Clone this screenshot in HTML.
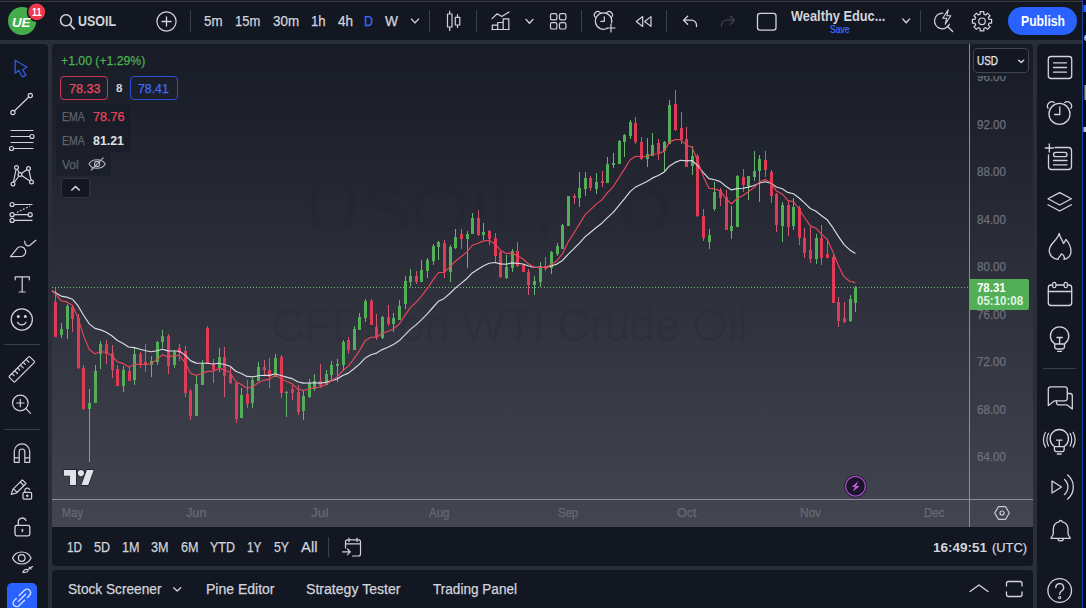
<!DOCTYPE html>
<html lang="en"><head><meta charset="utf-8"><title>USOIL chart</title>
<style>
html,body{margin:0;padding:0;}
body{width:1086px;height:608px;overflow:hidden;background:#2a2e39;font-family:"Liberation Sans", sans-serif;position:relative;}
.abs{position:absolute;}
.t{position:absolute;white-space:nowrap;transform-origin:0 50%;-webkit-text-stroke:0.25px currentColor;}
#top{left:0;top:0;width:1082px;height:40px;background:#131722;}
#topline{left:0;top:0;width:1086px;height:2px;background:linear-gradient(180deg,#1a1b20 0,#1a1b20 50%,#363942 50%,#363942 100%);}
#left{left:0;top:44px;width:48px;height:564px;background:#131722;border-top-right-radius:4px;}
#right{left:1037px;top:44px;width:45px;height:564px;background:#131722;border-top-left-radius:4px;}
#edge{left:1082px;top:0;width:4px;height:608px;background:#0b0d14;border-left:1px solid #1d3f9e;box-sizing:border-box;}
#chart{left:52px;top:44px;width:981px;height:483px;background:linear-gradient(180deg,#171b26 0%,#434550 100%);border-radius:4px 4px 0 0;overflow:hidden;}
#range{left:52px;top:527px;width:981px;height:39px;background:#131722;border-radius:0 0 4px 4px;}
#bottom{left:52px;top:570px;width:981px;height:38px;background:#131722;border-radius:4px 4px 0 0;}
#wm1,#wm2{position:absolute;color:rgba(0,0,0,0.07);white-space:nowrap;text-align:center;left:52px;width:918px;}
#wm1{top:121px;font-size:76px;line-height:90px;transform:scaleY(0.86);left:253px;color:rgba(0,0,0,0.035);width:auto;text-align:left;}
#wm2{top:254px;font-size:46px;line-height:54px;left:219px;width:auto;text-align:left;letter-spacing:-0.45px;}
.lg{background:rgba(19,23,34,0.42);}
#usd{left:973px;top:48px;width:56px;height:25px;box-sizing:border-box;border:1px solid #41444f;border-radius:4px;background:#131722;}
#plabel{left:969px;top:279px;width:60px;height:31px;background:#52af57;border-radius:0 2px 2px 0;}
#pub{left:1008px;top:7px;width:69px;height:28px;border-radius:14px;background:#2962ff;}
#linkb{left:7px;top:583px;width:30px;height:30px;border-radius:5px;background:#2962ff;}
#collapse{left:61px;top:178px;width:29px;height:20px;box-sizing:border-box;border:1px solid #2f333e;border-radius:3px;background:#131722;}
.box{box-sizing:border-box;border-radius:4px;height:24px;top:76px;}
</style></head><body>
<div class="abs" id="top"></div>
<div class="abs" id="left"></div>
<div class="abs" id="right"></div>
<div class="abs" id="chart">
<div id="wm1">USOIL, 1D</div>
<div id="wm2">CFDs on WTI Crude Oil</div>
</div>
<div class="abs lg" style="left:56px;top:104px;width:75px;height:24px;"></div>
<div class="abs lg" style="left:56px;top:128px;width:75px;height:24px;"></div>
<div class="abs lg" style="left:56px;top:152px;width:55px;height:24px;"></div>
<svg class="abs" style="left:0;top:0" width="1086" height="608" viewBox="0 0 1086 608" shape-rendering="auto">
<g shape-rendering="crispEdges">
<rect x="969" y="44" width="1" height="483" fill="#8b8e98"/>
<rect x="52" y="499" width="981" height="1" fill="#8b8e98"/>
</g>
<line x1="52" y1="287.5" x2="970" y2="287.5" stroke="#6fbf73" stroke-width="1" stroke-dasharray="1 2"/>
<rect x="55" y="288" width="1" height="49" fill="#cf5870"/>
<rect x="54" y="302" width="3" height="35" fill="#df3a56"/>
<rect x="61" y="323" width="1" height="15" fill="#66b46e"/>
<rect x="60" y="329" width="3" height="6" fill="#52af57"/>
<rect x="67" y="304" width="1" height="35" fill="#66b46e"/>
<rect x="66" y="306" width="3" height="23" fill="#52af57"/>
<rect x="72" y="305" width="1" height="27" fill="#cf5870"/>
<rect x="71" y="307" width="3" height="12" fill="#df3a56"/>
<rect x="78" y="314" width="1" height="55" fill="#cf5870"/>
<rect x="77" y="318" width="3" height="50" fill="#df3a56"/>
<rect x="83" y="365" width="1" height="45" fill="#cf5870"/>
<rect x="82" y="368" width="3" height="41" fill="#df3a56"/>
<rect x="89" y="389" width="1" height="73" fill="#66b46e"/>
<rect x="88" y="403" width="3" height="6" fill="#52af57"/>
<rect x="95" y="365" width="1" height="38" fill="#66b46e"/>
<rect x="94" y="371" width="3" height="32" fill="#52af57"/>
<rect x="100" y="341" width="1" height="28" fill="#66b46e"/>
<rect x="99" y="344" width="3" height="10" fill="#52af57"/>
<rect x="106" y="340" width="1" height="24" fill="#cf5870"/>
<rect x="105" y="344" width="3" height="10" fill="#df3a56"/>
<rect x="112" y="345" width="1" height="33" fill="#cf5870"/>
<rect x="111" y="353" width="3" height="17" fill="#df3a56"/>
<rect x="117" y="365" width="1" height="21" fill="#cf5870"/>
<rect x="116" y="369" width="3" height="17" fill="#df3a56"/>
<rect x="123" y="366" width="1" height="26" fill="#66b46e"/>
<rect x="122" y="370" width="3" height="16" fill="#52af57"/>
<rect x="129" y="366" width="1" height="15" fill="#cf5870"/>
<rect x="128" y="371" width="3" height="10" fill="#df3a56"/>
<rect x="134" y="348" width="1" height="37" fill="#66b46e"/>
<rect x="133" y="354" width="3" height="26" fill="#52af57"/>
<rect x="140" y="352" width="1" height="16" fill="#cf5870"/>
<rect x="139" y="354" width="3" height="10" fill="#df3a56"/>
<rect x="145" y="344" width="1" height="28" fill="#cf5870"/>
<rect x="144" y="362" width="3" height="3" fill="#df3a56"/>
<rect x="151" y="356" width="1" height="21" fill="#66b46e"/>
<rect x="150" y="361" width="3" height="4" fill="#52af57"/>
<rect x="157" y="341" width="1" height="24" fill="#66b46e"/>
<rect x="156" y="342" width="3" height="20" fill="#52af57"/>
<rect x="162" y="330" width="1" height="18" fill="#66b46e"/>
<rect x="161" y="336" width="3" height="6" fill="#52af57"/>
<rect x="168" y="334" width="1" height="40" fill="#cf5870"/>
<rect x="167" y="336" width="3" height="30" fill="#df3a56"/>
<rect x="174" y="350" width="1" height="18" fill="#66b46e"/>
<rect x="173" y="352" width="3" height="13" fill="#52af57"/>
<rect x="179" y="344" width="1" height="17" fill="#cf5870"/>
<rect x="178" y="348" width="3" height="5" fill="#df3a56"/>
<rect x="185" y="346" width="1" height="51" fill="#cf5870"/>
<rect x="184" y="351" width="3" height="42" fill="#df3a56"/>
<rect x="190" y="389" width="1" height="31" fill="#cf5870"/>
<rect x="189" y="391" width="3" height="25" fill="#df3a56"/>
<rect x="196" y="375" width="1" height="41" fill="#66b46e"/>
<rect x="195" y="384" width="3" height="32" fill="#52af57"/>
<rect x="202" y="360" width="1" height="25" fill="#66b46e"/>
<rect x="201" y="364" width="3" height="21" fill="#52af57"/>
<rect x="207" y="326" width="1" height="38" fill="#cf5870"/>
<rect x="206" y="328" width="3" height="36" fill="#df3a56"/>
<rect x="213" y="359" width="1" height="24" fill="#cf5870"/>
<rect x="212" y="364" width="3" height="6" fill="#df3a56"/>
<rect x="219" y="348" width="1" height="24" fill="#66b46e"/>
<rect x="218" y="357" width="3" height="11" fill="#52af57"/>
<rect x="224" y="347" width="1" height="50" fill="#cf5870"/>
<rect x="223" y="357" width="3" height="19" fill="#df3a56"/>
<rect x="230" y="366" width="1" height="18" fill="#cf5870"/>
<rect x="229" y="374" width="3" height="9" fill="#df3a56"/>
<rect x="236" y="383" width="1" height="40" fill="#cf5870"/>
<rect x="235" y="383" width="3" height="36" fill="#df3a56"/>
<rect x="241" y="388" width="1" height="30" fill="#66b46e"/>
<rect x="240" y="395" width="3" height="23" fill="#52af57"/>
<rect x="247" y="380" width="1" height="28" fill="#cf5870"/>
<rect x="246" y="394" width="3" height="10" fill="#df3a56"/>
<rect x="252" y="377" width="1" height="31" fill="#66b46e"/>
<rect x="251" y="380" width="3" height="23" fill="#52af57"/>
<rect x="258" y="362" width="1" height="19" fill="#66b46e"/>
<rect x="257" y="367" width="3" height="14" fill="#52af57"/>
<rect x="264" y="360" width="1" height="15" fill="#cf5870"/>
<rect x="263" y="367" width="3" height="3" fill="#df3a56"/>
<rect x="269" y="358" width="1" height="30" fill="#cf5870"/>
<rect x="268" y="370" width="3" height="7" fill="#df3a56"/>
<rect x="275" y="354" width="1" height="23" fill="#66b46e"/>
<rect x="274" y="358" width="3" height="19" fill="#52af57"/>
<rect x="281" y="355" width="1" height="43" fill="#cf5870"/>
<rect x="280" y="357" width="3" height="36" fill="#df3a56"/>
<rect x="286" y="391" width="1" height="26" fill="#66b46e"/>
<rect x="285" y="392" width="3" height="1" fill="#52af57"/>
<rect x="292" y="385" width="1" height="15" fill="#cf5870"/>
<rect x="291" y="389" width="3" height="4" fill="#df3a56"/>
<rect x="298" y="385" width="1" height="30" fill="#cf5870"/>
<rect x="297" y="392" width="3" height="20" fill="#df3a56"/>
<rect x="303" y="390" width="1" height="30" fill="#66b46e"/>
<rect x="302" y="396" width="3" height="15" fill="#52af57"/>
<rect x="309" y="379" width="1" height="19" fill="#66b46e"/>
<rect x="308" y="383" width="3" height="14" fill="#52af57"/>
<rect x="314" y="374" width="1" height="17" fill="#66b46e"/>
<rect x="313" y="381" width="3" height="8" fill="#52af57"/>
<rect x="320" y="364" width="1" height="24" fill="#cf5870"/>
<rect x="319" y="381" width="3" height="5" fill="#df3a56"/>
<rect x="326" y="370" width="1" height="15" fill="#66b46e"/>
<rect x="325" y="374" width="3" height="11" fill="#52af57"/>
<rect x="331" y="361" width="1" height="19" fill="#66b46e"/>
<rect x="330" y="365" width="3" height="10" fill="#52af57"/>
<rect x="337" y="359" width="1" height="23" fill="#66b46e"/>
<rect x="336" y="364" width="3" height="2" fill="#52af57"/>
<rect x="343" y="340" width="1" height="31" fill="#66b46e"/>
<rect x="342" y="342" width="3" height="23" fill="#52af57"/>
<rect x="348" y="337" width="1" height="17" fill="#cf5870"/>
<rect x="347" y="340" width="3" height="10" fill="#df3a56"/>
<rect x="354" y="326" width="1" height="24" fill="#66b46e"/>
<rect x="353" y="329" width="3" height="21" fill="#52af57"/>
<rect x="359" y="313" width="1" height="17" fill="#66b46e"/>
<rect x="358" y="317" width="3" height="13" fill="#52af57"/>
<rect x="365" y="299" width="1" height="23" fill="#66b46e"/>
<rect x="364" y="301" width="3" height="17" fill="#52af57"/>
<rect x="371" y="299" width="1" height="26" fill="#cf5870"/>
<rect x="370" y="301" width="3" height="24" fill="#df3a56"/>
<rect x="376" y="314" width="1" height="26" fill="#cf5870"/>
<rect x="375" y="327" width="3" height="10" fill="#df3a56"/>
<rect x="382" y="316" width="1" height="23" fill="#66b46e"/>
<rect x="381" y="317" width="3" height="21" fill="#52af57"/>
<rect x="388" y="305" width="1" height="21" fill="#cf5870"/>
<rect x="387" y="317" width="3" height="7" fill="#df3a56"/>
<rect x="393" y="313" width="1" height="19" fill="#66b46e"/>
<rect x="392" y="318" width="3" height="6" fill="#52af57"/>
<rect x="399" y="300" width="1" height="20" fill="#66b46e"/>
<rect x="398" y="306" width="3" height="14" fill="#52af57"/>
<rect x="405" y="276" width="1" height="33" fill="#66b46e"/>
<rect x="404" y="281" width="3" height="23" fill="#52af57"/>
<rect x="410" y="269" width="1" height="18" fill="#66b46e"/>
<rect x="409" y="276" width="3" height="6" fill="#52af57"/>
<rect x="416" y="271" width="1" height="13" fill="#cf5870"/>
<rect x="415" y="276" width="3" height="6" fill="#df3a56"/>
<rect x="421" y="260" width="1" height="22" fill="#66b46e"/>
<rect x="420" y="270" width="3" height="12" fill="#52af57"/>
<rect x="427" y="258" width="1" height="20" fill="#66b46e"/>
<rect x="426" y="260" width="3" height="11" fill="#52af57"/>
<rect x="433" y="244" width="1" height="21" fill="#66b46e"/>
<rect x="432" y="246" width="3" height="15" fill="#52af57"/>
<rect x="438" y="241" width="1" height="19" fill="#66b46e"/>
<rect x="437" y="242" width="3" height="5" fill="#52af57"/>
<rect x="444" y="240" width="1" height="38" fill="#cf5870"/>
<rect x="443" y="243" width="3" height="29" fill="#df3a56"/>
<rect x="450" y="245" width="1" height="37" fill="#66b46e"/>
<rect x="449" y="247" width="3" height="25" fill="#52af57"/>
<rect x="455" y="229" width="1" height="20" fill="#66b46e"/>
<rect x="454" y="237" width="3" height="11" fill="#52af57"/>
<rect x="461" y="229" width="1" height="20" fill="#cf5870"/>
<rect x="460" y="234" width="3" height="5" fill="#df3a56"/>
<rect x="467" y="231" width="1" height="37" fill="#66b46e"/>
<rect x="466" y="234" width="3" height="5" fill="#52af57"/>
<rect x="472" y="213" width="1" height="21" fill="#66b46e"/>
<rect x="471" y="218" width="3" height="16" fill="#52af57"/>
<rect x="478" y="210" width="1" height="26" fill="#cf5870"/>
<rect x="477" y="218" width="3" height="17" fill="#df3a56"/>
<rect x="483" y="223" width="1" height="17" fill="#66b46e"/>
<rect x="482" y="232" width="3" height="3" fill="#52af57"/>
<rect x="489" y="230" width="1" height="15" fill="#cf5870"/>
<rect x="488" y="231" width="3" height="8" fill="#df3a56"/>
<rect x="495" y="233" width="1" height="29" fill="#cf5870"/>
<rect x="494" y="238" width="3" height="18" fill="#df3a56"/>
<rect x="500" y="251" width="1" height="27" fill="#cf5870"/>
<rect x="499" y="252" width="3" height="25" fill="#df3a56"/>
<rect x="506" y="255" width="1" height="24" fill="#66b46e"/>
<rect x="505" y="267" width="3" height="11" fill="#52af57"/>
<rect x="512" y="249" width="1" height="23" fill="#66b46e"/>
<rect x="511" y="251" width="3" height="17" fill="#52af57"/>
<rect x="517" y="242" width="1" height="25" fill="#cf5870"/>
<rect x="516" y="251" width="3" height="15" fill="#df3a56"/>
<rect x="523" y="264" width="1" height="8" fill="#cf5870"/>
<rect x="522" y="265" width="3" height="7" fill="#df3a56"/>
<rect x="528" y="269" width="1" height="26" fill="#cf5870"/>
<rect x="527" y="272" width="3" height="13" fill="#df3a56"/>
<rect x="534" y="276" width="1" height="19" fill="#66b46e"/>
<rect x="533" y="281" width="3" height="4" fill="#52af57"/>
<rect x="540" y="262" width="1" height="25" fill="#66b46e"/>
<rect x="539" y="266" width="3" height="16" fill="#52af57"/>
<rect x="545" y="257" width="1" height="14" fill="#cf5870"/>
<rect x="544" y="266" width="3" height="3" fill="#df3a56"/>
<rect x="551" y="251" width="1" height="23" fill="#66b46e"/>
<rect x="550" y="252" width="3" height="16" fill="#52af57"/>
<rect x="557" y="243" width="1" height="13" fill="#66b46e"/>
<rect x="556" y="246" width="3" height="8" fill="#52af57"/>
<rect x="562" y="224" width="1" height="25" fill="#66b46e"/>
<rect x="561" y="225" width="3" height="24" fill="#52af57"/>
<rect x="568" y="196" width="1" height="30" fill="#66b46e"/>
<rect x="567" y="196" width="3" height="30" fill="#52af57"/>
<rect x="574" y="194" width="1" height="10" fill="#cf5870"/>
<rect x="573" y="196" width="3" height="2" fill="#df3a56"/>
<rect x="579" y="172" width="1" height="35" fill="#66b46e"/>
<rect x="578" y="188" width="3" height="10" fill="#52af57"/>
<rect x="585" y="172" width="1" height="24" fill="#66b46e"/>
<rect x="584" y="178" width="3" height="11" fill="#52af57"/>
<rect x="590" y="176" width="1" height="15" fill="#cf5870"/>
<rect x="589" y="178" width="3" height="10" fill="#df3a56"/>
<rect x="596" y="173" width="1" height="21" fill="#66b46e"/>
<rect x="595" y="182" width="3" height="7" fill="#52af57"/>
<rect x="602" y="171" width="1" height="16" fill="#cf5870"/>
<rect x="601" y="181" width="3" height="2" fill="#df3a56"/>
<rect x="607" y="157" width="1" height="26" fill="#66b46e"/>
<rect x="606" y="164" width="3" height="19" fill="#52af57"/>
<rect x="613" y="153" width="1" height="15" fill="#66b46e"/>
<rect x="612" y="163" width="3" height="2" fill="#52af57"/>
<rect x="619" y="140" width="1" height="24" fill="#66b46e"/>
<rect x="618" y="141" width="3" height="23" fill="#52af57"/>
<rect x="624" y="134" width="1" height="23" fill="#66b46e"/>
<rect x="623" y="135" width="3" height="7" fill="#52af57"/>
<rect x="630" y="120" width="1" height="19" fill="#66b46e"/>
<rect x="629" y="122" width="3" height="14" fill="#52af57"/>
<rect x="635" y="117" width="1" height="27" fill="#cf5870"/>
<rect x="634" y="123" width="3" height="19" fill="#df3a56"/>
<rect x="641" y="137" width="1" height="23" fill="#cf5870"/>
<rect x="640" y="142" width="3" height="17" fill="#df3a56"/>
<rect x="647" y="138" width="1" height="29" fill="#66b46e"/>
<rect x="646" y="154" width="3" height="5" fill="#52af57"/>
<rect x="652" y="133" width="1" height="23" fill="#66b46e"/>
<rect x="651" y="145" width="3" height="11" fill="#52af57"/>
<rect x="658" y="139" width="1" height="21" fill="#cf5870"/>
<rect x="657" y="143" width="3" height="10" fill="#df3a56"/>
<rect x="664" y="141" width="1" height="30" fill="#66b46e"/>
<rect x="663" y="142" width="3" height="9" fill="#52af57"/>
<rect x="669" y="100" width="1" height="44" fill="#66b46e"/>
<rect x="668" y="105" width="3" height="39" fill="#52af57"/>
<rect x="675" y="90" width="1" height="41" fill="#cf5870"/>
<rect x="674" y="104" width="3" height="26" fill="#df3a56"/>
<rect x="681" y="112" width="1" height="32" fill="#cf5870"/>
<rect x="680" y="128" width="3" height="12" fill="#df3a56"/>
<rect x="686" y="127" width="1" height="40" fill="#cf5870"/>
<rect x="685" y="139" width="3" height="28" fill="#df3a56"/>
<rect x="692" y="146" width="1" height="29" fill="#66b46e"/>
<rect x="691" y="156" width="3" height="10" fill="#52af57"/>
<rect x="697" y="154" width="1" height="63" fill="#cf5870"/>
<rect x="696" y="156" width="3" height="60" fill="#df3a56"/>
<rect x="703" y="209" width="1" height="32" fill="#cf5870"/>
<rect x="702" y="216" width="3" height="22" fill="#df3a56"/>
<rect x="709" y="229" width="1" height="20" fill="#66b46e"/>
<rect x="708" y="235" width="3" height="7" fill="#52af57"/>
<rect x="714" y="182" width="1" height="29" fill="#66b46e"/>
<rect x="713" y="192" width="3" height="17" fill="#52af57"/>
<rect x="720" y="188" width="1" height="18" fill="#cf5870"/>
<rect x="719" y="190" width="3" height="8" fill="#df3a56"/>
<rect x="726" y="190" width="1" height="40" fill="#cf5870"/>
<rect x="725" y="197" width="3" height="33" fill="#df3a56"/>
<rect x="731" y="206" width="1" height="33" fill="#66b46e"/>
<rect x="730" y="226" width="3" height="5" fill="#52af57"/>
<rect x="737" y="175" width="1" height="52" fill="#66b46e"/>
<rect x="736" y="176" width="3" height="51" fill="#52af57"/>
<rect x="743" y="169" width="1" height="23" fill="#cf5870"/>
<rect x="742" y="177" width="3" height="8" fill="#df3a56"/>
<rect x="748" y="176" width="1" height="24" fill="#66b46e"/>
<rect x="747" y="176" width="3" height="10" fill="#52af57"/>
<rect x="754" y="151" width="1" height="30" fill="#66b46e"/>
<rect x="753" y="171" width="3" height="6" fill="#52af57"/>
<rect x="759" y="155" width="1" height="47" fill="#66b46e"/>
<rect x="758" y="159" width="3" height="12" fill="#52af57"/>
<rect x="765" y="151" width="1" height="26" fill="#cf5870"/>
<rect x="764" y="160" width="3" height="10" fill="#df3a56"/>
<rect x="771" y="170" width="1" height="33" fill="#cf5870"/>
<rect x="770" y="172" width="3" height="24" fill="#df3a56"/>
<rect x="776" y="193" width="1" height="39" fill="#cf5870"/>
<rect x="775" y="194" width="3" height="31" fill="#df3a56"/>
<rect x="782" y="202" width="1" height="40" fill="#66b46e"/>
<rect x="781" y="205" width="3" height="21" fill="#52af57"/>
<rect x="788" y="200" width="1" height="36" fill="#cf5870"/>
<rect x="787" y="205" width="3" height="22" fill="#df3a56"/>
<rect x="793" y="198" width="1" height="32" fill="#66b46e"/>
<rect x="792" y="207" width="3" height="19" fill="#52af57"/>
<rect x="799" y="206" width="1" height="39" fill="#cf5870"/>
<rect x="798" y="208" width="3" height="30" fill="#df3a56"/>
<rect x="804" y="228" width="1" height="30" fill="#cf5870"/>
<rect x="803" y="238" width="3" height="15" fill="#df3a56"/>
<rect x="810" y="227" width="1" height="36" fill="#cf5870"/>
<rect x="809" y="250" width="3" height="9" fill="#df3a56"/>
<rect x="816" y="234" width="1" height="30" fill="#66b46e"/>
<rect x="815" y="238" width="3" height="21" fill="#52af57"/>
<rect x="821" y="225" width="1" height="40" fill="#cf5870"/>
<rect x="820" y="238" width="3" height="20" fill="#df3a56"/>
<rect x="827" y="241" width="1" height="17" fill="#cf5870"/>
<rect x="826" y="254" width="3" height="4" fill="#df3a56"/>
<rect x="833" y="255" width="1" height="48" fill="#cf5870"/>
<rect x="832" y="257" width="3" height="46" fill="#df3a56"/>
<rect x="838" y="297" width="1" height="30" fill="#cf5870"/>
<rect x="837" y="302" width="3" height="19" fill="#df3a56"/>
<rect x="844" y="302" width="1" height="21" fill="#cf5870"/>
<rect x="843" y="318" width="3" height="4" fill="#df3a56"/>
<rect x="850" y="295" width="1" height="27" fill="#66b46e"/>
<rect x="849" y="299" width="3" height="22" fill="#52af57"/>
<rect x="855" y="286" width="1" height="26" fill="#66b46e"/>
<rect x="854" y="288" width="3" height="15" fill="#52af57"/>
<path d="M52.0,290.9 L55.5,292.7 L61.1,296.1 L66.8,297.1 L72.4,299.2 L78.0,305.7 L83.7,315.5 L89.3,323.9 L94.9,328.4 L100.6,329.9 L106.2,332.2 L111.8,335.8 L117.5,340.5 L123.1,343.4 L128.7,347.0 L134.4,347.6 L140.0,349.2 L145.6,350.7 L151.3,351.7 L156.9,350.7 L162.5,349.3 L168.2,350.9 L173.8,351.0 L179.4,351.2 L185.1,355.1 L190.7,360.9 L196.3,363.1 L202.0,363.2 L207.6,363.3 L213.2,364.0 L218.9,363.3 L224.5,364.5 L230.1,366.2 L235.8,371.3 L241.4,373.5 L247.0,376.4 L252.7,376.8 L258.3,375.8 L263.9,375.2 L269.6,375.4 L275.2,373.7 L280.8,375.5 L286.5,377.1 L292.1,378.6 L297.7,381.7 L303.4,383.1 L309.0,383.0 L314.6,382.8 L320.3,383.1 L325.9,382.3 L331.5,380.6 L337.1,379.0 L342.8,375.5 L348.4,373.1 L354.0,368.8 L359.7,363.9 L365.3,357.9 L370.9,354.7 L376.6,353.1 L382.2,349.6 L387.8,347.2 L393.5,344.4 L399.1,340.8 L404.7,335.1 L410.4,329.4 L416.0,324.9 L421.6,319.6 L427.3,313.9 L432.9,307.5 L438.5,301.2 L444.2,298.4 L449.8,293.5 L455.4,288.1 L461.1,283.4 L466.7,278.7 L472.3,272.9 L478.0,269.3 L483.6,265.7 L489.2,263.2 L494.9,262.5 L500.5,263.9 L506.1,264.2 L511.8,262.9 L517.4,263.2 L523.0,264.0 L528.7,266.0 L534.3,267.4 L539.9,267.3 L545.6,267.5 L551.2,266.0 L556.8,264.1 L562.5,260.4 L568.1,254.3 L573.7,248.9 L579.4,243.1 L585.0,236.9 L590.6,232.2 L596.3,227.5 L601.9,223.2 L607.5,217.6 L613.2,212.4 L618.8,205.6 L624.4,198.9 L630.1,191.6 L635.7,186.9 L641.3,184.2 L647.0,181.4 L652.6,177.9 L658.2,175.5 L663.9,172.3 L669.5,165.9 L675.1,162.4 L680.8,160.3 L686.4,160.9 L692.0,160.5 L697.7,165.7 L703.3,172.6 L708.9,178.6 L714.6,179.8 L720.2,181.6 L725.8,186.2 L731.5,189.9 L737.1,188.6 L742.7,188.3 L748.4,187.1 L754.0,185.5 L759.6,183.0 L765.3,181.7 L770.9,183.1 L776.5,187.0 L782.2,188.7 L787.8,192.4 L793.4,193.8 L799.1,198.0 L804.7,203.2 L810.3,208.5 L816.0,211.3 L821.6,215.8 L827.2,219.8 L832.9,227.7 L838.5,236.6 L844.1,244.7 L849.8,249.9 L855.4,253.5" fill="none" stroke="#d9dbe2" stroke-width="1.15" stroke-linejoin="round"/>
<path d="M52.0,290.3 L55.5,293.8 L61.1,300.8 L66.8,301.9 L72.4,305.3 L78.0,317.8 L83.7,336.1 L89.3,349.5 L94.9,353.8 L100.6,351.8 L106.2,352.2 L111.8,355.8 L117.5,361.8 L123.1,363.6 L128.7,367.1 L134.4,364.4 L140.0,364.4 L145.6,364.5 L151.3,363.8 L156.9,359.4 L162.5,354.7 L168.2,356.9 L173.8,355.9 L179.4,355.3 L185.1,362.8 L190.7,373.4 L196.3,375.5 L202.0,373.2 L207.6,371.4 L213.2,371.2 L218.9,368.4 L224.5,369.8 L230.1,372.5 L235.8,381.7 L241.4,384.5 L247.0,388.3 L252.7,386.7 L258.3,382.7 L263.9,380.1 L269.6,379.4 L275.2,375.1 L280.8,378.6 L286.5,381.3 L292.1,383.6 L297.7,389.1 L303.4,390.5 L309.0,389.0 L314.6,387.4 L320.3,387.1 L325.9,384.5 L331.5,380.5 L337.1,377.2 L342.8,370.3 L348.4,366.1 L354.0,358.6 L359.7,350.3 L365.3,340.4 L370.9,337.3 L376.6,337.2 L382.2,333.2 L387.8,331.4 L393.5,328.8 L399.1,324.2 L404.7,315.6 L410.4,307.6 L416.0,302.4 L421.6,295.9 L427.3,288.7 L432.9,280.1 L438.5,272.5 L444.2,272.4 L449.8,267.2 L455.4,261.2 L461.1,256.7 L466.7,252.1 L472.3,245.3 L478.0,243.3 L483.6,240.9 L489.2,240.5 L494.9,243.7 L500.5,250.3 L506.1,253.6 L511.8,253.1 L517.4,255.6 L523.0,259.0 L528.7,264.1 L534.3,267.5 L539.9,267.2 L545.6,267.6 L551.2,264.5 L556.8,260.8 L562.5,253.7 L568.1,242.1 L573.7,233.2 L579.4,224.1 L585.0,214.9 L590.6,209.6 L596.3,204.1 L601.9,199.9 L607.5,192.7 L613.2,186.8 L618.8,177.7 L624.4,169.1 L630.1,159.8 L635.7,156.2 L641.3,156.8 L647.0,156.2 L652.6,154.0 L658.2,153.8 L663.9,151.4 L669.5,142.1 L675.1,139.6 L680.8,139.8 L686.4,145.1 L692.0,147.3 L697.7,161.0 L703.3,176.4 L708.9,188.2 L714.6,188.9 L720.2,190.7 L725.8,198.5 L731.5,204.0 L737.1,198.4 L742.7,195.7 L748.4,191.7 L754.0,187.6 L759.6,181.8 L765.3,179.4 L770.9,182.7 L776.5,191.1 L782.2,193.9 L787.8,200.4 L793.4,201.7 L799.1,209.0 L804.7,217.7 L810.3,225.9 L816.0,228.3 L821.6,234.4 L827.2,239.2 L832.9,251.9 L838.5,265.7 L844.1,276.9 L849.8,281.3 L855.4,282.6" fill="none" stroke="#e8455a" stroke-width="1.15" stroke-linejoin="round"/>
</svg>
<div class="abs" id="range"></div>
<div class="abs" id="bottom"></div>
<div class="abs" id="usd"></div>
<div class="abs" id="plabel"></div>
<div class="abs" id="pub"></div>
<div class="abs" id="linkb"></div>
<div class="abs" id="collapse"></div>
<div class="abs box" style="left:60px;width:48px;border:1px solid #cf364b;"></div>
<div class="abs box" style="left:130px;width:48px;border:1px solid #2b52d6;"></div>
<div class="abs" id="topline"></div>
<div class="abs" id="edge"></div>
<svg class="abs" style="left:0;top:0" width="1086" height="608" viewBox="0 0 1086 608" fill="none" stroke="#d1d4dc" stroke-width="1.2" stroke-linecap="round" stroke-linejoin="round">
<circle cx="22.100" cy="21" r="14.100" fill="#43ad4c" stroke="none"/>
<circle cx="36.700" cy="11.900" r="9.200" fill="#ee3a4c" stroke="#131722" stroke-width="1.600"/>
<circle cx="66" cy="20.300" r="5.500" stroke-width="1.500"/><path d="M70 24.500L74.200 28.900" stroke-width="1.700"/>
<circle cx="166.5" cy="21.5" r="9.6" stroke-width="1.2"/><path d="M166.5 17v9M162 21.5h9" stroke-width="1.3"/>
<path d="M190.5 10V32" stroke="#3a3e4a" stroke-width="1" stroke-linecap="butt"/>
<path d="M429.5 10V32" stroke="#3a3e4a" stroke-width="1" stroke-linecap="butt"/>
<path d="M476.5 10V32" stroke="#3a3e4a" stroke-width="1" stroke-linecap="butt"/>
<path d="M581.5 10V32" stroke="#3a3e4a" stroke-width="1" stroke-linecap="butt"/>
<path d="M666.5 10V32" stroke="#3a3e4a" stroke-width="1" stroke-linecap="butt"/>
<path d="M920.5 10V32" stroke="#3a3e4a" stroke-width="1" stroke-linecap="butt"/>
<path d="M411.5 19.1L415 22.9L418.5 19.1" stroke-width="1.4"/>
<path d="M526.0 19.400000000000002L529.5 23.2L533.0 19.400000000000002" stroke-width="1.4"/>
<path d="M902.7 18.900000000000002L906.2 22.7L909.7 18.900000000000002" stroke-width="1.4"/>
<path d="M447.5 14h4.5v13h-4.5zM449.7 11v3M449.7 27v3.5M455.3 17.3h4.5v7.7h-4.5zM457.5 14.5v2.8M457.5 25v2.5" stroke-width="1.2"/>
<path d="M492 18.6L497.2 13.8L501.8 16.6L509 11.9" stroke-width="1.2"/>
<path d="M492.3 29.5V25.2H497.7V29.5M497.7 25.2V22.5H503.2V29.5M503.2 22.5V18.8H508.8V29.5M491.8 29.5H509.3" stroke-width="1.2"/>
<rect x="550.5" y="13.6" width="6.4" height="6.3" rx="1.6" stroke-width="1.2"/>
<rect x="559.5" y="13.6" width="6.4" height="6.3" rx="1.6" stroke-width="1.2"/>
<rect x="550.5" y="22.7" width="6.4" height="6.3" rx="1.6" stroke-width="1.2"/>
<rect x="559.5" y="22.7" width="6.4" height="6.3" rx="1.6" stroke-width="1.2"/>
<path d="M607.5 28.3A8.2 8.2 0 1 1 611.6 22.8" stroke-width="1.2"/>
<path d="M604.3 16.8V21.3H600.8" stroke-width="1.2"/>
<path d="M595.3 17.3A3.4 3.4 0 0 1 600.3 12.6M606.500 12.6A3.4 3.4 0 0 1 611.500 17.3" stroke-width="1.2"/>
<path d="M611 24v8M607 28h8" stroke-width="1.2"/>
<path d="M636.3 21.5L642.7 16.6V26.4ZM644.7 21.5L651 16.6V26.4Z" stroke-width="1.2"/>
<path d="M687.6 16.2L683.6 20.2L687.6 24.2M684 20.2H691.5A5 5 0 0 1 696.5 25.2V26.5" stroke-width="1.3"/>
<path d="M730.4 16.2L734.4 20.2L730.4 24.2M734 20.2H726.5A5 5 0 0 0 721.5 25.2V26.5" stroke="#3f434e" stroke-width="1.3"/>
<rect x="757.5" y="13.3" width="18.5" height="16.8" rx="2.6" stroke-width="1.3"/>
<path d="M942.8 13.2A7.8 7.8 0 1 0 949.4 24.3" stroke-width="1.2"/>
<path d="M947.3 26.300L952.6 31.500" stroke-width="1.3"/>
<path d="M948.2 9.800L942.8 18.300H946.6L945.2 24.300L950.800 15.700H946.900Z" stroke-width="1.1" fill="#131722"/>
<path d="M991.6 19.4L991.6 23.2L989.2 23.1L988.3 25.1L990.1 26.8L987.5 29.4L985.8 27.6L983.8 28.5L983.9 30.9L980.1 30.9L980.2 28.5L978.2 27.6L976.5 29.4L973.9 26.8L975.7 25.1L974.8 23.1L972.4 23.2L972.4 19.4L974.8 19.5L975.7 17.5L973.9 15.8L976.5 13.2L978.2 15.0L980.2 14.1L980.1 11.7L983.9 11.7L983.8 14.1L985.8 15.0L987.5 13.2L990.1 15.8L988.3 17.5L989.2 19.5Z" stroke-width="1.2"/><circle cx="982" cy="21.3" r="3.3" stroke-width="1.2"/>
<path d="M15.200 60.300L15.200 73.200L18.700 70.300L22.500 77L25.900 75.100L22.600 69.700L26.800 67.300Z" stroke="#2f5be0" stroke-width="1.3"/>
<circle cx="12.900" cy="112.500" r="2.100" /><circle cx="30.300" cy="95.500" r="2.100"/><path d="M14.400 111L28.800 97"/>
<path d="M11 130.5H33M11 136.5H30M11 142.5H33M14 148.5H33" /><circle cx="32" cy="136.5" r="2" fill="#131722"/><circle cx="11.5" cy="148.5" r="2" fill="#131722"/>
<path d="M13 184L16.5 167.5L20 174.5L28.5 168.5L31.5 182L20 174.5L13 184" />
<circle cx="16.5" cy="167.5" r="1.9" fill="#131722"/>
<circle cx="20" cy="174.5" r="1.9" fill="#131722"/>
<circle cx="28.5" cy="168.5" r="1.9" fill="#131722"/>
<circle cx="31.5" cy="182" r="1.9" fill="#131722"/>
<circle cx="13" cy="184" r="1.9" fill="#131722"/>
<path d="M14.300 204.500H32M14.300 214.700H28M14.300 220.400H32"/><path d="M17.300 212.200L29.600 206.300" stroke-dasharray="0.8 2.6"/>
<circle cx="12.100" cy="204.500" r="2" fill="#131722"/><circle cx="12.100" cy="214.700" r="2" fill="#131722"/><circle cx="30.200" cy="214.700" r="2" fill="#131722"/><circle cx="12.100" cy="220.400" r="2" fill="#131722"/>
<path d="M10.500 256.700L17.600 247.900A4.900 4.900 0 1 1 21.500 256.500Z"/><path d="M24.700 241.200C24.700 244.500 27 246.600 29.400 245.700L35.800 240.300"/>
<path d="M15.2 279.800V276.800H29.3V279.800M22.2 276.800V292M19.2 292H25.2" stroke-width="1.2"/>
<circle cx="21.8" cy="319.5" r="10.6"/><circle cx="18.3" cy="316.5" r="0.9" fill="#d1d4dc"/><circle cx="25.3" cy="316.5" r="0.9" fill="#d1d4dc"/><path d="M17.5 322.3A4.8 4.8 0 0 0 26 322.3"/>
<path d="M4 344.5H40M4 429.5H40" stroke="#3a3e4a" stroke-linecap="butt"/>
<g transform="translate(21.8 369.3) rotate(-45)"><rect x="-14.5" y="-4" width="29" height="8" rx="1"/><path d="M-10 -4v3M-6 -4v4M-2 -4v3M2 -4v4M6 -4v3M10 -4v4"/></g>
<circle cx="20.3" cy="403" r="7.8"/><path d="M20.3 399.3v7.4M16.6 403h7.4M26 408.7L30.5 413.3"/>
<path d="M14.3 462.3V451.5A7.7 7.7 0 0 1 29.7 451.5V462.3H24.8V451.8A2.8 2.8 0 0 0 19.2 451.8V462.3ZM14.3 457.8H19.2M24.8 457.8H29.7"/>
<path d="M11.3 494.3L12.8 489.3L22.3 479.8L26 483.5L16.5 493L11.3 494.3ZM20.2 482L23.8 485.6M13.5 488.8L17 492.3"/>
<rect x="23" y="492.3" width="8.6" height="6.8" rx="1" fill="#131722"/><path d="M24.8 492.3V490.5A2.5 2.5 0 0 1 29.6 489.6"/><circle cx="27.3" cy="495.8" r="0.6" fill="#d1d4dc"/>
<rect x="15" y="525.3" width="14.8" height="10.5" rx="1.8" stroke-width="1.3"/><path d="M18.3 525.3V522A4 4 0 0 1 26 520.5" stroke-width="1.3"/><path d="M22.4 529.5V531.5" stroke-width="1.6"/>
<path d="M12.5 558C16 550 27.5 550 31 558C27.5 566 16 566 12.5 558Z"/><circle cx="21.7" cy="558" r="3.3"/>
<path d="M22.8 572.3C24 569.5 26.5 568.5 28 570C28.5 571.8 26 572.8 22.8 572.3ZM28.5 569.2L32.5 566.5M29.3 567.2L31 569"/>
<g stroke="#cfdcff" stroke-width="1.4"><path d="M19.2 595.5L24.5 590.2A3.6 3.6 0 0 1 29.6 595.3L27.5 597.4"/><path d="M24.6 600.3L19.3 605.6A3.6 3.6 0 0 1 14.2 600.5L16.3 598.4"/><path d="M18.3 601.5L25.5 594.3"/></g>
<rect x="1048.3" y="56.5" width="23.4" height="22" rx="2.8" stroke-width="1.3"/><path d="M1053.5 62.8H1066.5M1053.5 67.5H1066.5M1053.5 72.2H1066.5" stroke-width="1.3"/>
<circle cx="1059.500" cy="113.900" r="10.500" stroke-width="1.3"/><path d="M1059.800 107V114.500H1054.600" stroke-width="1.3"/><path d="M1048 108.300A4.400 4.400 0 0 1 1054.300 102.500M1064.700 102.500A4.400 4.400 0 0 1 1071 108.300" stroke-width="1.3"/>
<path d="M1055 147.5H1068.5A3 3 0 0 1 1071.5 150.5V166.5A3 3 0 0 1 1068.5 169.5H1051.5A3 3 0 0 1 1048.5 166.5V155" stroke-width="1.3"/><rect x="1053.5" y="152.3" width="13.5" height="4.4" rx="2.2" stroke-width="1.3"/><path d="M1053.5 160.5H1067M1053.5 164.8H1067M1049.3 144V152M1045.3 148H1053.3" stroke-width="1.3"/>
<path d="M1059.700 192.600L1071.400 198.800L1059.700 205L1048 198.800ZM1048 204.800L1059.700 211L1071.400 204.800" stroke-width="1.3"/>
<path d="M1059.200 233.300C1059.800 237 1062 239.500 1063.600 243.600C1064.300 242.300 1065.300 241 1066 239.300C1068.500 242.500 1071 246.500 1071 250.800C1071 255.300 1068 258.500 1064 259.300C1064.800 257.500 1064 255.300 1061.300 253.800C1061 256 1058.300 257 1058 259.300C1053.500 259 1049.200 255.500 1049.200 250.500C1049.200 243.500 1057.500 240.500 1059.200 233.300Z" stroke-width="1.3"/>
<rect x="1048.3" y="285" width="23.4" height="20.5" rx="2.8" stroke-width="1.3"/><path d="M1048.3 291.5H1071.7" stroke-width="1.3"/><rect x="1052.600" y="282.400" width="3.300" height="5.200" rx="1.600" fill="#131722" stroke-width="1.2"/><rect x="1064.100" y="282.400" width="3.300" height="5.200" rx="1.600" fill="#131722" stroke-width="1.2"/>
<path d="M1064.74 343.63A9.2 9.2 0 1 0 1054.46 343.63" stroke-width="1.3"/>
<path d="M1054.6999999999998 344H1064.5V346.5A2.5 2.5 0 0 1 1062.0 349H1057.1999999999998A2.5 2.5 0 0 1 1054.6999999999998 346.5ZM1057.6 351.3H1061.6M1056.8999999999999 337.5H1062.3M1059.6 337.5V344" stroke-width="1.3"/>
<path d="M1043 368.5H1075.5" stroke="#3a3e4a" stroke-linecap="butt"/>
<path d="M1050.5 386.8H1065A2.3 2.3 0 0 1 1067.3 389.1V398.5A2.3 2.3 0 0 1 1065 400.8H1054.5L1048.3 405.6V389.1A2.3 2.3 0 0 1 1050.5 386.8Z" stroke-width="1.3"/><path d="M1067.5 393.5H1070A2.3 2.3 0 0 1 1072.3 395.8V409L1066.8 404.8H1058.5A2.3 2.3 0 0 1 1056.5 402.5V401" stroke-width="1.3"/>
<path d="M1064.44 446.33A9.2 9.2 0 1 0 1054.16 446.33" stroke-width="1.3"/>
<path d="M1054.3999999999999 446.7H1064.2V449.2A2.5 2.5 0 0 1 1061.7 451.7H1056.8999999999999A2.5 2.5 0 0 1 1054.3999999999999 449.2ZM1057.3 454.0H1061.3M1056.6 440.2H1062.0M1059.3 440.2V446.7" stroke-width="1.3"/>
<path d="M1048.500 433.300A14.400 14.400 0 0 0 1048.500 446.100M1045.500 432.300A15.400 15.400 0 0 0 1045.500 447.100M1070.100 433.300A14.400 14.400 0 0 1 1070.100 446.100M1073.100 432.300A15.400 15.400 0 0 1 1073.100 447.100" stroke-width="1.2"/>
<path d="M1052 481V493L1061.5 487Z" stroke-width="1.3"/><path d="M1064.5 479.5A10 10 0 0 1 1064.5 494.5M1067.6 475A15.5 15.5 0 0 1 1067.6 499" stroke-width="1.3"/>
<path d="M1051 538.3H1070.3C1070.3 537 1068 536.3 1068 533V529A7.4 7.4 0 0 0 1062.3 521.8A1.7 1.7 0 0 0 1059 521.8A7.4 7.4 0 0 0 1053.3 529V533C1053.3 536.3 1051 537 1051 538.3ZM1057.8 538.6A2.9 2.9 0 0 0 1063.5 538.6" stroke-width="1.3"/>
<circle cx="1059.7" cy="590.5" r="11.8" stroke-width="1.3"/><path d="M1055.8 587.6A3.9 3.9 0 1 1 1061.5 591C1060 592 1059.7 592.8 1059.7 594.3" stroke-width="1.4"/><circle cx="1059.7" cy="597.6" r="1.1" stroke-width="1.1"/>
<g stroke="#b6b9c3" stroke-width="1.1"><path d="M89 164C92 158.300 102 158.300 105.200 164C102 169.700 92 169.700 89 164Z"/><circle cx="97.1" cy="164" r="2.6"/><path d="M91.3 170L103.200 157.800"/></g>
<path d="M71.800 190L75.500 186.500L79.200 190" stroke-width="1.6"/>
<path d="M1018.700 60.300L1021.200 62.600L1023.700 60.300" stroke-width="1.4"/>
<path d="M173.700 587.800L177.200 591L180.700 587.800" stroke-width="1.3"/>
<path d="M328.500 537V557" stroke="#3a3e4a" stroke-linecap="butt"/>
<path d="M345.500 548V541.800A2 2 0 0 1 347.500 539.800H358.500A2 2 0 0 1 360.500 541.800V554A2 2 0 0 1 358.500 556H352.500M345.500 543.800H360.500M349 538V541.500M357 538V541.500M342.500 551.800H350M347.500 549L350.300 551.800L347.500 554.600" stroke-width="1.2"/>
<polygon points="1009.3,513.0 1005.6,519.3 998.4,519.3 994.7,513.0 998.4,506.7 1005.6,506.7" stroke="#c9ccd4" stroke-width="1.2"/><circle cx="1002" cy="513" r="2" stroke="#c9ccd4" stroke-width="1.2"/>
<path d="M970 591.500L979 585L988 591.500" stroke-width="1.300"/>
<path d="M1006.500 586V583.500A2 2 0 0 1 1008.500 581.500H1020A2 2 0 0 1 1022 583.500V586M1006.500 592V594.500A2 2 0 0 0 1008.500 596.500H1020A2 2 0 0 0 1022 594.500V592" stroke-width="1.300"/>
<circle cx="855.500" cy="486.300" r="11.300" fill="#241a30" stroke="none"/><circle cx="855.500" cy="486.300" r="9.900" fill="#1d132c" stroke="#a352c4" stroke-width="1.300"/>
<path d="M858.500 481.100L851.700 487L855.200 486.800L852.700 491.700L859.700 485.900L856.100 486.100Z" fill="#c264da" stroke="none"/>
<g fill="#e1e3ea" stroke="#1a1d28" stroke-width="1.3" stroke-linejoin="round" paint-order="stroke"><path d="M63.900 469.900H76V485H69.900V475.700H63.900Z"/><circle cx="80.900" cy="473.100" r="3.100"/><path d="M86.900 469.900H93.700L88.200 485H81.400Z"/></g>
<g stroke="none"><rect x="1083.500" y="5" width="2.500" height="7" fill="#2962ff"/><rect x="1084.500" y="85" width="1.500" height="15" fill="#9ea3b0"/><rect x="1083.500" y="127" width="2.500" height="5" fill="#c3c7d2"/></g>
</svg>
<span class="t" id="t0" style="left:32px;top:5.5px;font-size:10px;line-height:13px;font-weight:700;color:#fff;transform:scaleX(0.9075);-webkit-text-stroke:0;">11</span>
<span class="t" id="t1" style="left:12px;top:13.5px;font-size:13px;line-height:17px;font-weight:700;color:#fff;transform:scaleX(1.0242);font-style:italic;-webkit-text-stroke:0;">UE</span>
<span class="t" id="t2" style="left:78px;top:12.0px;font-size:14px;line-height:18px;font-weight:700;color:#d1d4dc;transform:scaleX(0.8882);-webkit-text-stroke:0;">USOIL</span>
<span class="t" id="t3" style="left:203.5px;top:12.0px;font-size:14px;line-height:18px;font-weight:400;color:#d1d4dc;transform:scaleX(0.9510);">5m</span>
<span class="t" id="t4" style="left:234.7px;top:12.0px;font-size:14px;line-height:18px;font-weight:400;color:#d1d4dc;transform:scaleX(0.9290);">15m</span>
<span class="t" id="t5" style="left:272.5px;top:12.0px;font-size:14px;line-height:18px;font-weight:400;color:#d1d4dc;transform:scaleX(0.9583);">30m</span>
<span class="t" id="t6" style="left:311px;top:12.0px;font-size:14px;line-height:18px;font-weight:400;color:#d1d4dc;transform:scaleX(0.9372);">1h</span>
<span class="t" id="t7" style="left:337.6px;top:12.0px;font-size:14px;line-height:18px;font-weight:400;color:#d1d4dc;transform:scaleX(0.9693);">4h</span>
<span class="t" id="t8" style="left:364px;top:12.0px;font-size:14px;line-height:18px;font-weight:400;color:#3d6bff;transform:scaleX(0.8889);">D</span>
<span class="t" id="t9" style="left:385px;top:12.0px;font-size:14px;line-height:18px;font-weight:400;color:#d1d4dc;transform:scaleX(0.9835);">W</span>
<span class="t" id="t10" style="left:790.6px;top:7.0px;font-size:14px;line-height:18px;font-weight:700;color:#d1d4dc;transform:scaleX(0.9146);-webkit-text-stroke:0;">Wealthy Educ...</span>
<span class="t" id="t11" style="left:829.8px;top:21.6px;font-size:11px;line-height:14px;font-weight:400;color:#3d6bff;transform:scaleX(0.7776);">Save</span>
<span class="t" id="t12" style="left:1021px;top:12.2px;font-size:14px;line-height:18px;font-weight:700;color:#fff;transform:scaleX(0.8702);-webkit-text-stroke:0;">Publish</span>
<span class="t" id="t13" style="left:1083.5px;top:30.5px;font-size:10px;line-height:13px;font-weight:400;color:#e8e8ee;transform:scaleX(0.9888);">e</span>
<span class="t" id="t14" style="left:60.6px;top:52.1px;font-size:13px;line-height:17px;font-weight:400;color:#4caf50;transform:scaleX(0.9406);">+1.00 (+1.29%)</span>
<span class="t" id="t15" style="left:69px;top:79.5px;font-size:13px;line-height:17px;font-weight:400;color:#f0495d;transform:scaleX(0.9648);">78.33</span>
<span class="t" id="t16" style="left:115.8px;top:81.0px;font-size:11px;line-height:14px;font-weight:700;color:#d1d4dc;transform:scaleX(1.0612);-webkit-text-stroke:0;">8</span>
<span class="t" id="t17" style="left:138.2px;top:79.5px;font-size:13px;line-height:17px;font-weight:400;color:#3d6bff;transform:scaleX(0.9463);">78.41</span>
<span class="t" id="t18" style="left:61.6px;top:108.1px;font-size:13px;line-height:17px;font-weight:400;color:#5f626d;transform:scaleX(0.8058);">EMA</span>
<span class="t" id="t19" style="left:93px;top:108.1px;font-size:13px;line-height:17px;font-weight:400;color:#e8455a;transform:scaleX(0.9709);">78.76</span>
<span class="t" id="t20" style="left:61.6px;top:132.1px;font-size:13px;line-height:17px;font-weight:400;color:#5f626d;transform:scaleX(0.8058);">EMA</span>
<span class="t" id="t21" style="left:93px;top:132.1px;font-size:13px;line-height:17px;font-weight:700;color:#dfe1e8;transform:scaleX(0.9525);-webkit-text-stroke:0;">81.21</span>
<span class="t" id="t22" style="left:61.6px;top:155.5px;font-size:13px;line-height:17px;font-weight:400;color:#5f626d;transform:scaleX(0.9182);">Vol</span>
<span class="t" id="t23" style="left:977px;top:69.3px;font-size:12px;line-height:16px;font-weight:400;color:#6d707b;transform:scaleX(0.9657);clip-path:inset(6.7px 0 0 0);">96.00</span>
<span class="t" id="t24" style="left:977px;top:116.6px;font-size:12px;line-height:16px;font-weight:400;color:#6d707b;transform:scaleX(0.9657);">92.00</span>
<span class="t" id="t25" style="left:977px;top:164.2px;font-size:12px;line-height:16px;font-weight:400;color:#6d707b;transform:scaleX(0.9657);">88.00</span>
<span class="t" id="t26" style="left:977px;top:211.6px;font-size:12px;line-height:16px;font-weight:400;color:#6d707b;transform:scaleX(0.9657);">84.00</span>
<span class="t" id="t27" style="left:977px;top:259.3px;font-size:12px;line-height:16px;font-weight:400;color:#6d707b;transform:scaleX(0.9657);">80.00</span>
<span class="t" id="t28" style="left:977px;top:306.8px;font-size:12px;line-height:16px;font-weight:400;color:#6d707b;transform:scaleX(0.9657);">76.00</span>
<span class="t" id="t29" style="left:977px;top:354.3px;font-size:12px;line-height:16px;font-weight:400;color:#6d707b;transform:scaleX(0.9657);">72.00</span>
<span class="t" id="t30" style="left:977px;top:401.6px;font-size:12px;line-height:16px;font-weight:400;color:#6d707b;transform:scaleX(0.9657);">68.00</span>
<span class="t" id="t31" style="left:977px;top:448.6px;font-size:12px;line-height:16px;font-weight:400;color:#6d707b;transform:scaleX(0.9657);">64.00</span>
<span class="t" id="t32" style="left:977px;top:52.6px;font-size:12px;line-height:16px;font-weight:400;color:#e6e8ee;transform:scaleX(0.8286);">USD</span>
<span class="t" id="t33" style="left:977px;top:279.6px;font-size:12px;line-height:16px;font-weight:700;color:#fff;transform:scaleX(0.9523);-webkit-text-stroke:0;">78.31</span>
<span class="t" id="t34" style="left:977px;top:293.4px;font-size:12px;line-height:16px;font-weight:700;color:#dff3e0;transform:scaleX(0.9616);-webkit-text-stroke:0;">05:10:08</span>
<span class="t" id="t35" style="left:61.5px;top:505.0px;font-size:12px;line-height:16px;font-weight:400;color:#676a75;transform:scaleX(0.9263);">May</span>
<span class="t" id="t36" style="left:185.5px;top:505.0px;font-size:12px;line-height:16px;font-weight:400;color:#676a75;transform:scaleX(1.0589);">Jun</span>
<span class="t" id="t37" style="left:311px;top:505.0px;font-size:12px;line-height:16px;font-weight:400;color:#676a75;transform:scaleX(1.1405);">Jul</span>
<span class="t" id="t38" style="left:428.5px;top:505.0px;font-size:12px;line-height:16px;font-weight:400;color:#676a75;transform:scaleX(0.9598);">Aug</span>
<span class="t" id="t39" style="left:558px;top:505.0px;font-size:12px;line-height:16px;font-weight:400;color:#676a75;transform:scaleX(0.9364);">Sep</span>
<span class="t" id="t40" style="left:676.5px;top:505.0px;font-size:12px;line-height:16px;font-weight:400;color:#676a75;transform:scaleX(1.0444);">Oct</span>
<span class="t" id="t41" style="left:800px;top:505.0px;font-size:12px;line-height:16px;font-weight:400;color:#676a75;transform:scaleX(0.9839);">Nov</span>
<span class="t" id="t42" style="left:924px;top:505.0px;font-size:12px;line-height:16px;font-weight:400;color:#676a75;transform:scaleX(0.9605);">Dec</span>
<span class="t" id="t43" style="left:66.5px;top:538.0px;font-size:14px;line-height:18px;font-weight:400;color:#d1d4dc;transform:scaleX(0.8377);">1D</span>
<span class="t" id="t44" style="left:94px;top:538.0px;font-size:14px;line-height:18px;font-weight:400;color:#d1d4dc;transform:scaleX(0.8935);">5D</span>
<span class="t" id="t45" style="left:122px;top:538.0px;font-size:14px;line-height:18px;font-weight:400;color:#d1d4dc;transform:scaleX(0.8996);">1M</span>
<span class="t" id="t46" style="left:151px;top:538.0px;font-size:14px;line-height:18px;font-weight:400;color:#d1d4dc;transform:scaleX(0.8996);">3M</span>
<span class="t" id="t47" style="left:180.5px;top:538.0px;font-size:14px;line-height:18px;font-weight:400;color:#d1d4dc;transform:scaleX(0.8996);">6M</span>
<span class="t" id="t48" style="left:209.5px;top:538.0px;font-size:14px;line-height:18px;font-weight:400;color:#d1d4dc;transform:scaleX(0.8929);">YTD</span>
<span class="t" id="t49" style="left:247px;top:538.0px;font-size:14px;line-height:18px;font-weight:400;color:#d1d4dc;transform:scaleX(0.8467);">1Y</span>
<span class="t" id="t50" style="left:274px;top:538.0px;font-size:14px;line-height:18px;font-weight:400;color:#d1d4dc;transform:scaleX(0.8759);">5Y</span>
<span class="t" id="t51" style="left:301px;top:538.0px;font-size:14px;line-height:18px;font-weight:400;color:#d1d4dc;transform:scaleX(1.0602);">All</span>
<span class="t" id="t52" style="left:933px;top:538.5px;font-size:13px;line-height:17px;font-weight:700;color:#d1d4dc;transform:scaleX(1.0375);-webkit-text-stroke:0;">16:49:51</span>
<span class="t" id="t53" style="left:992px;top:538.5px;font-size:13px;line-height:17px;font-weight:400;color:#d1d4dc;transform:scaleX(0.9890);">(UTC)</span>
<span class="t" id="t54" style="left:67.5px;top:579.5px;font-size:14px;line-height:18px;font-weight:400;color:#d1d4dc;transform:scaleX(0.9768);">Stock Screener</span>
<span class="t" id="t55" style="left:206px;top:579.5px;font-size:14px;line-height:18px;font-weight:400;color:#d1d4dc;transform:scaleX(1.0002);">Pine Editor</span>
<span class="t" id="t56" style="left:306px;top:579.5px;font-size:14px;line-height:18px;font-weight:400;color:#d1d4dc;transform:scaleX(1.0063);">Strategy Tester</span>
<span class="t" id="t57" style="left:433px;top:579.5px;font-size:14px;line-height:18px;font-weight:400;color:#d1d4dc;transform:scaleX(0.9693);">Trading Panel</span>
</body></html>
